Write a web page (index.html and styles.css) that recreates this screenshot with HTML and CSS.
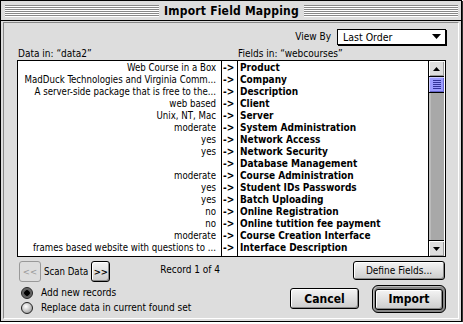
FILE: index.html
```html
<!DOCTYPE html>
<html lang="en">
<head>
  <meta charset="UTF-8" />
  <title>Import Field Mapping</title>
  <link rel="stylesheet" href="styles.css">
</head>
<body>

  <div class="window">
    <div class="titlebar">
      <div class="stripes"></div>
      <h1>Import Field Mapping</h1>
      <div class="stripes"></div>
    </div>

    <div class="content">
      <div class="view-row">
        <span class="small">View By</span>
        <div class="popup">
          <span>Last Order</span>
          <svg width="9" height="5" viewBox="0 0 9 5"><polygon points="0,0 9,0 4.5,5" fill="#000"/></svg>
        </div>
      </div>

      <div class="labels">
        <span class="small label-data">Data in: &#8220;data2&#8221;</span>
        <span class="small">Fields in: &#8220;webcourses&#8221;</span>
      </div>

      <div class="list">
        <div class="col data">
          <div class="row">Web Course in a Box</div>
          <div class="row">MadDuck Technologies and Virginia Comm...</div>
          <div class="row">A server-side package that is free to the...</div>
          <div class="row">web based</div>
          <div class="row">Unix, NT, Mac</div>
          <div class="row">moderate</div>
          <div class="row">yes</div>
          <div class="row">yes</div>
          <div class="row"></div>
          <div class="row">moderate</div>
          <div class="row">yes</div>
          <div class="row">yes</div>
          <div class="row">no</div>
          <div class="row">no</div>
          <div class="row">moderate</div>
          <div class="row">frames based website with questions to ...</div>
        </div>
        <div class="col arrows">
          <div class="row">-&gt;</div>
          <div class="row">-&gt;</div>
          <div class="row">-&gt;</div>
          <div class="row">-&gt;</div>
          <div class="row">-&gt;</div>
          <div class="row">-&gt;</div>
          <div class="row">-&gt;</div>
          <div class="row">-&gt;</div>
          <div class="row">-&gt;</div>
          <div class="row">-&gt;</div>
          <div class="row">-&gt;</div>
          <div class="row">-&gt;</div>
          <div class="row">-&gt;</div>
          <div class="row">-&gt;</div>
          <div class="row">-&gt;</div>
          <div class="row">-&gt;</div>
        </div>
        <div class="col fields">
          <div class="row">Product</div>
          <div class="row">Company</div>
          <div class="row">Description</div>
          <div class="row">Client</div>
          <div class="row">Server</div>
          <div class="row">System Administration</div>
          <div class="row">Network Access</div>
          <div class="row">Network Security</div>
          <div class="row">Database Management</div>
          <div class="row">Course Administration</div>
          <div class="row">Student IDs Passwords</div>
          <div class="row">Batch Uploading</div>
          <div class="row">Online Registration</div>
          <div class="row">Online tutition fee payment</div>
          <div class="row">Course Creation Interface</div>
          <div class="row">Interface Description</div>
        </div>
        <div class="scrollbar">
          <div class="arrow-box">
            <svg width="7" height="4" viewBox="0 0 7 4"><polygon points="3.5,0 7,4 0,4" fill="#000"/></svg>
          </div>
          <div class="thumb"><div class="grip"></div></div>
          <div class="track"></div>
          <div class="arrow-box bottom">
            <svg width="7" height="4" viewBox="0 0 7 4"><polygon points="0,0 7,0 3.5,4" fill="#000"/></svg>
          </div>
        </div>
      </div>

      <div class="footer">
        <div class="footer-left">
          <div class="scan-row">
            <button class="btn small-btn disabled">&lt;&lt;</button>
            <span class="small scan-label">Scan Data</span>
            <button class="btn small-btn">&gt;&gt;</button>
            <span class="small record">Record 1 of 4</span>
          </div>
          <label class="radio small"><span class="dot on"></span>Add new records</label>
          <label class="radio small"><span class="dot"></span>Replace data in current found set</label>
        </div>
        <div class="footer-right">
          <button class="btn define small">Define Fields...</button>
          <div class="actions">
            <button class="btn big">Cancel</button>
            <div class="default-ring"><button class="btn big">Import</button></div>
          </div>
        </div>
      </div>
    </div>
  </div>

</body>
</html>
```

FILE: styles.css
```css
* {
  margin: 0; padding: 0; box-sizing: border-box;
}
body {
  background: #fff;
  font-family: "DejaVu Sans Condensed", "DejaVu Sans", sans-serif;
}
.window {
  width: 462px;
  height: 322px;
  background: #dddddd;
  border: 1px solid #000;
  box-shadow: 1px 1px 0 #333;
  display: flex;
  flex-direction: column;
}
.titlebar {
  height: 20px;
  border-bottom: 1px solid #000;
  display: flex;
  align-items: center;
  padding: 0 3px 0 4px;
  gap: 5px;
  flex-shrink: 0;
}
.stripes {
  flex: 1;
  height: 12px;
  background: repeating-linear-gradient(to bottom, #888 0 1px, #fff 1px 2px);
}
.titlebar h1 {
  font-size: 12px;
  font-weight: bold;
  color: #000;
  letter-spacing: 0.2px;
}
.content {
  flex: 1;
  margin: 1px 2px 2px 2px;
  border-top: 1px solid #888;
  border-left: 1px solid #888;
  border-right: 1px solid #fff;
  border-bottom: 1px solid #fff;
  padding: 5px 12px 0 13px;
  display: flex;
  flex-direction: column;
}
.small {
  font-size: 10px;
  color: #000;
}
.view-row {
  display: flex;
  justify-content: flex-end;
  align-items: center;
  gap: 6px;
  height: 17px;
}
.popup {
  width: 109px;
  height: 16px;
  background: #fff;
  border: 1px solid #000;
  box-shadow: 1px 1px 0 #000;
  display: flex;
  align-items: center;
  justify-content: space-between;
  padding: 0 4px 0 5px;
  font-size: 10.5px;
}
.labels {
  display: flex;
  height: 12px;
  margin-top: 2px;
  margin-bottom: 1px;
  align-items: center;
}
.label-data {
  width: 221px;
  padding-left: 1px;
}
.list {
  display: flex;
  height: 197px;
  border: 1px solid #000;
  background: #fff;
}
.col {
  height: 100%;
}
.row {
  height: 12px;
  line-height: 12px;
  white-space: nowrap;
  overflow: hidden;
}
.data {
  width: 204px;
  border-right: 1px solid #000;
  text-align: right;
  padding-right: 5px;
  font-size: 9.6px;
}
.arrows {
  width: 16px;
  border-right: 1px solid #000;
  font-size: 10px;
  font-weight: bold;
  padding-left: 1px;
}
.fields {
  width: 190px;
  padding-left: 2px;
  font-size: 10px;
  font-weight: bold;
}
.col .row:first-child {
  margin-top: 1px;
}
.scrollbar {
  width: 16px;
  border-left: 1px solid #000;
  display: flex;
  flex-direction: column;
}
.arrow-box {
  height: 16px;
  background: #dddddd;
  border-bottom: 1px solid #000;
  box-shadow: inset 1px 1px 0 #fff, inset -1px -1px 0 #999;
  display: flex;
  align-items: center;
  justify-content: center;
}
.arrow-box.bottom {
  border-bottom: none;
  border-top: 1px solid #000;
}
.thumb {
  height: 16px;
  background: #9c9cff;
  border-bottom: 1px solid #000;
  box-shadow: inset 1px 1px 0 #ccccff, inset -1px -1px 0 #6666cc;
  display: flex;
  align-items: center;
  justify-content: center;
}
.grip {
  width: 8px;
  height: 9px;
  background: repeating-linear-gradient(to bottom, #333399 0 1px, transparent 1px 2px);
}
.track {
  flex: 1;
  background: #a8a8a8;
  box-shadow: inset 2px 0 0 #bbb;
}
.footer {
  display: flex;
  justify-content: space-between;
  margin-top: 4px;
}
.footer-left {
  padding-left: 2px;
}
.scan-row {
  display: flex;
  align-items: center;
  gap: 3px;
  height: 21px;
}
.scan-label {
  font-size: 9.6px;
}
.btn {
  font-family: inherit;
  color: #000;
  background: linear-gradient(#f4f4f4, #cccccc);
  border: 1px solid #000;
  border-radius: 3px;
  box-shadow: inset 1px 1px 0 #fff, inset -1px -1px 0 #888;
  cursor: pointer;
}
.small-btn {
  width: 19px;
  height: 21px;
  font-size: 9.5px;
  font-weight: bold;
}
.small-btn.disabled {
  width: 22px;
  border-color: #999;
  color: #999;
  background: #dddddd;
  box-shadow: none;
  font-weight: normal;
}
.record {
  margin-left: 47px;
  margin-top: -5px;
}
.radio {
  display: flex;
  align-items: center;
  gap: 8px;
  height: 15px;
  padding-left: 2px;
}
.radio:nth-of-type(1) {
  margin-top: 3px;
}
.dot {
  width: 12px;
  height: 12px;
  border-radius: 50%;
  border: 1px solid #222;
  background: radial-gradient(circle at 40% 35%, #fff 0, #ccc 45%, #888 100%);
}
.dot.on {
  background: radial-gradient(circle, #000 0 2.5px, #555 3px, #888 100%);
}
.footer-right {
  display: flex;
  flex-direction: column;
  align-items: flex-end;
}
.define {
  width: 92px;
  height: 19px;
  margin-right: 1px;
}
.actions {
  display: flex;
  align-items: center;
  gap: 13px;
  margin-top: 5px;
}
.big {
  font-size: 12px;
  font-weight: bold;
}
.actions > .big {
  width: 69px;
  height: 21px;
}
.default-ring {
  border: 1px solid #000;
  border-radius: 6px;
  padding: 2px;
  background: #888;
  box-shadow: inset 1px 1px 0 #bbb;
}
.default-ring .big {
  width: 68px;
  height: 21px;
}
```
